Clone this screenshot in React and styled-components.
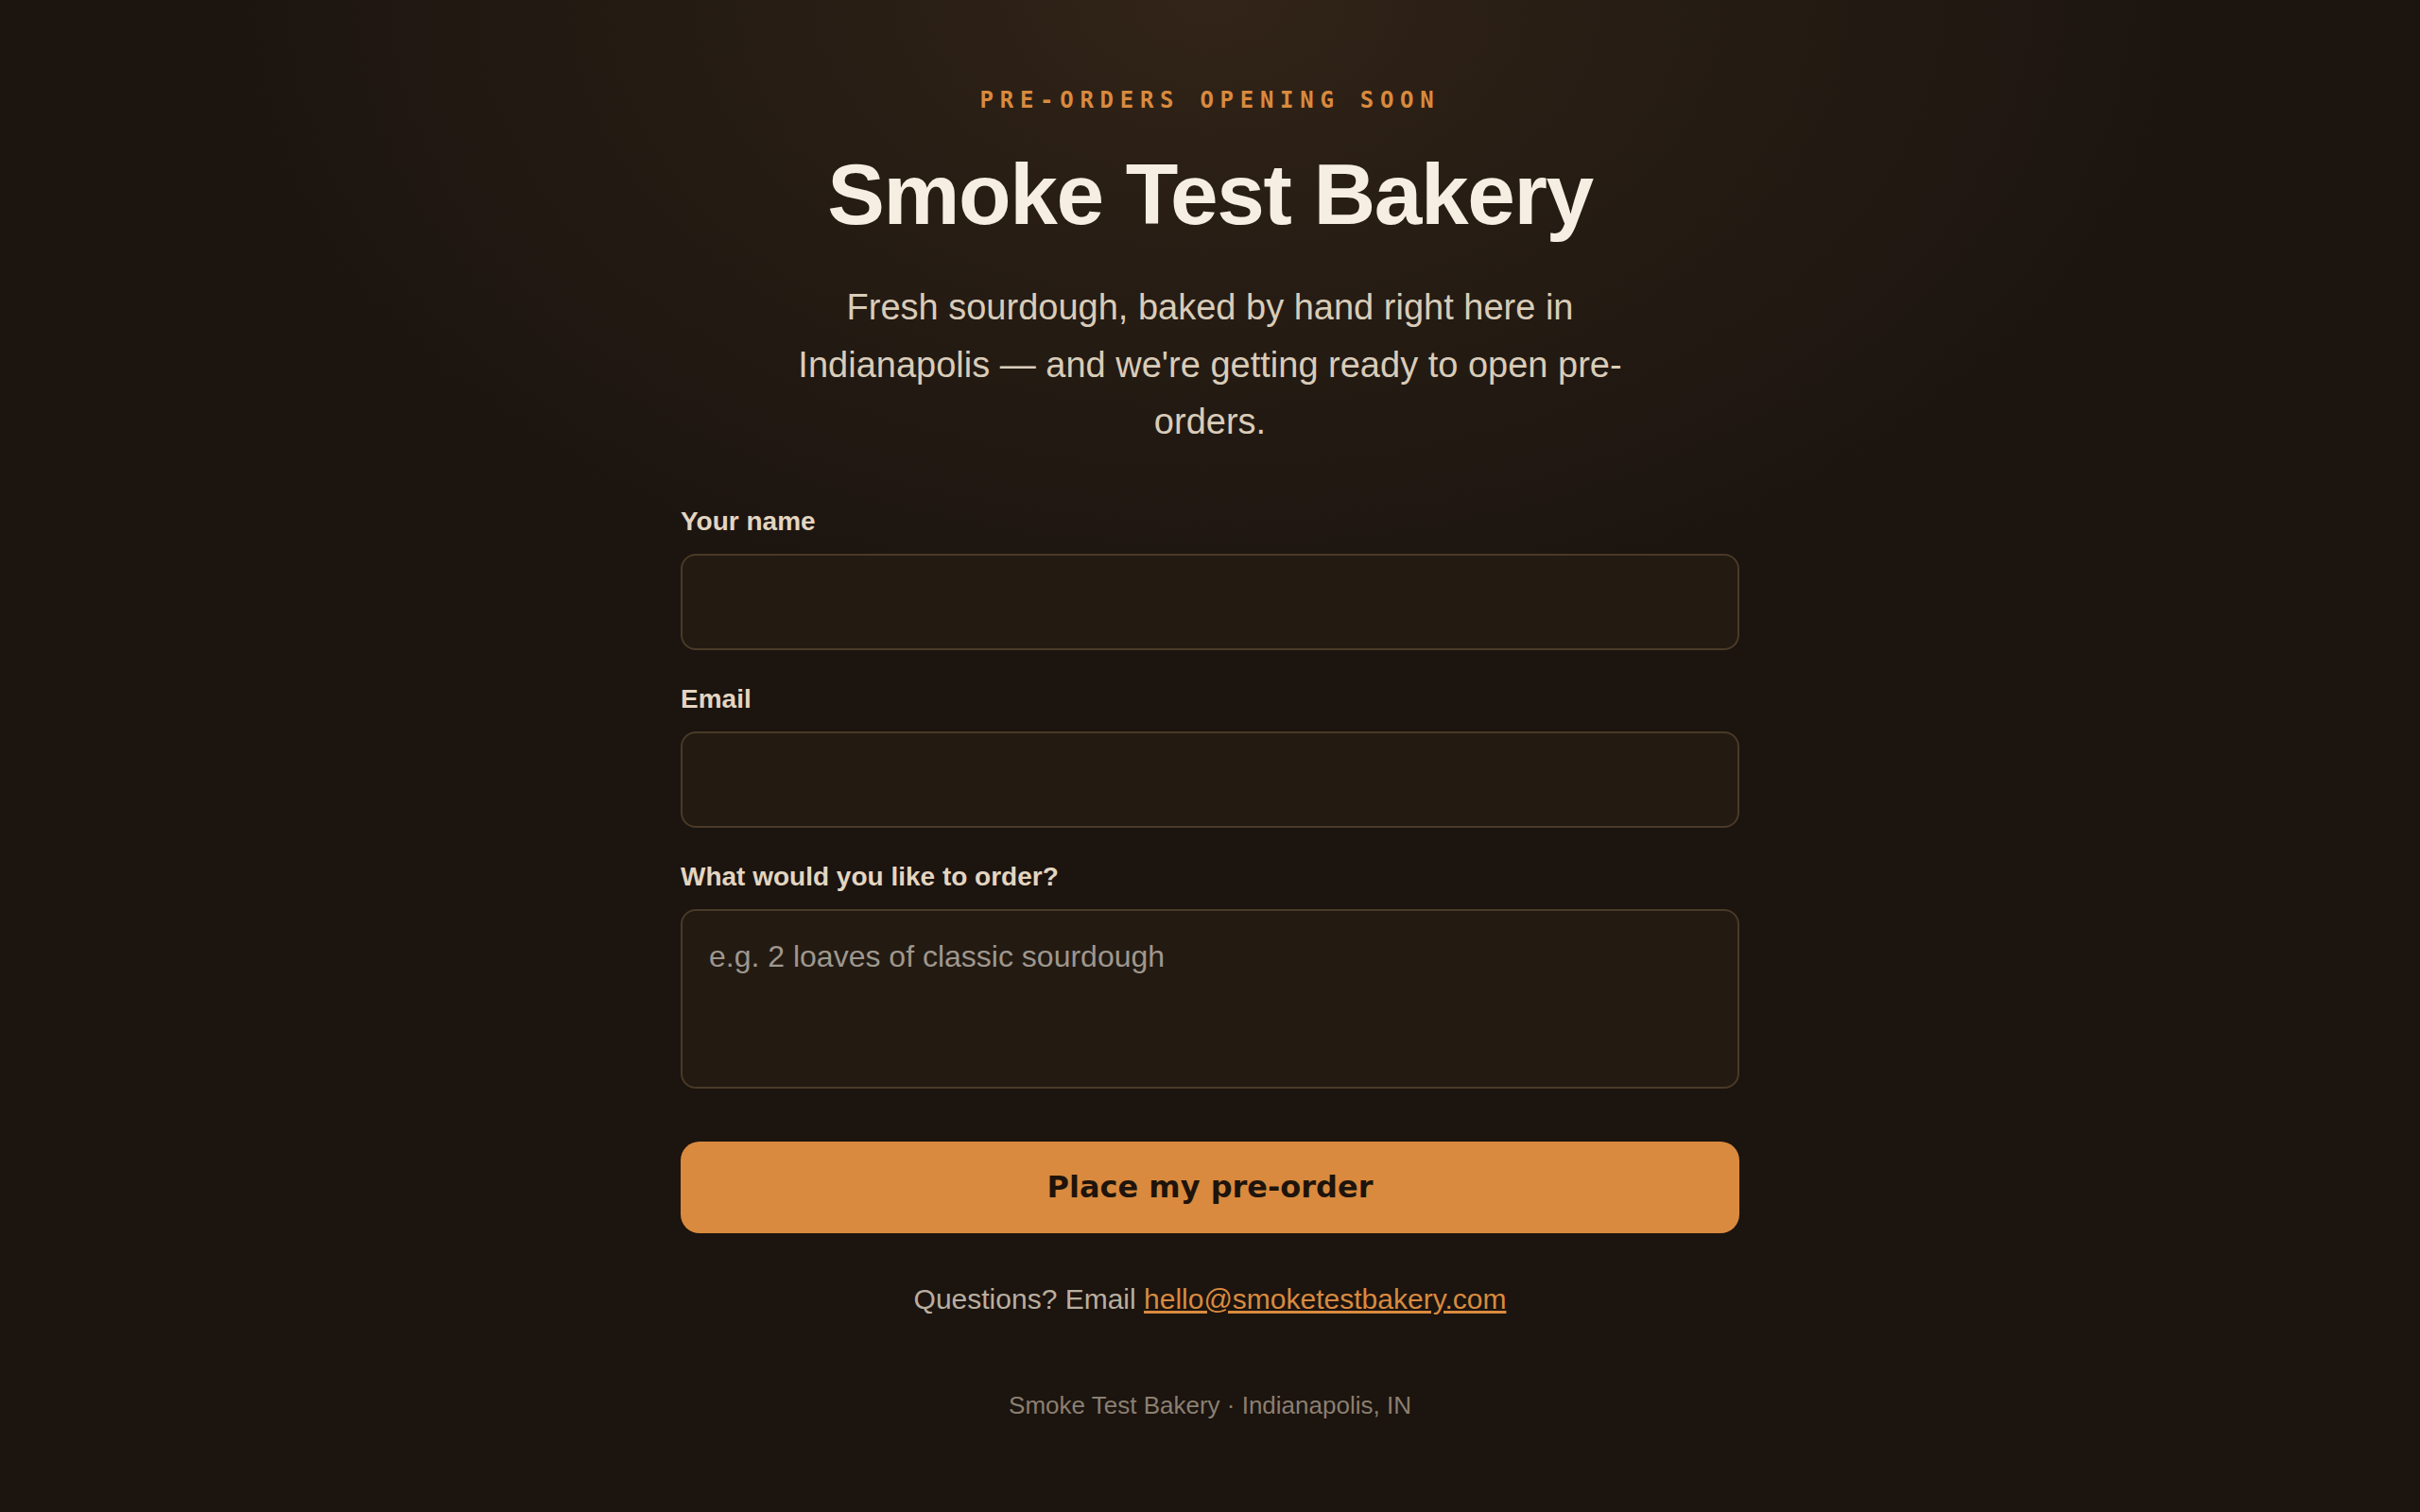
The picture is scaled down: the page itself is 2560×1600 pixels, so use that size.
import styled, { createGlobalStyle } from "styled-components";

const GlobalStyle = createGlobalStyle`
  html,
  body {
    margin: 0;
    min-height: 100%;
  }

  body {
    min-height: 100vh;
    background-color: #1b140f;
    background-image: radial-gradient(
      ellipse 1100px 700px at 50% 0%,
      #322418 0%,
      #271d14 40%,
      #1b140f 100%
    );
    background-repeat: no-repeat;
    font-family: "Liberation Sans", Arial, sans-serif;
    color: #e3d5c1;
  }

  * {
    box-sizing: border-box;
  }
`;

const Page = styled.main`
  width: 1120px;
  margin: 0 auto;
  padding: 92px 0 80px;
  text-align: center;
`;

const Eyebrow = styled.p`
  margin: 0;
  font-family: "DejaVu Sans Mono", monospace;
  font-size: 24px;
  font-weight: 700;
  line-height: 28px;
  letter-spacing: 0.28em;
  color: #d98a3e;
`;

const Title = styled.h1`
  margin: 36px 0 0;
  font-size: 91px;
  font-weight: 700;
  line-height: 1.1;
  letter-spacing: -0.015em;
  color: #f6eee2;
`;

const Intro = styled.p`
  max-width: 900px;
  margin: 39px auto 0;
  font-size: 38px;
  line-height: 60.5px;
  color: #d9ccb9;
`;

const Form = styled.form`
  display: flex;
  flex-direction: column;
  gap: 36px;
  margin-top: 59px;
  text-align: left;
`;

const Field = styled.div`
  display: flex;
  flex-direction: column;
  gap: 18px;
`;

const Label = styled.label`
  font-size: 28px;
  font-weight: 700;
  line-height: 32px;
  color: #e3d5c1;
`;

const Input = styled.input`
  height: 102px;
  padding: 0 28px;
  font-family: "Liberation Sans", Arial, sans-serif;
  font-size: 32px;
  color: #f0e6d8;
  background: #231a12;
  border: 2px solid #4a3a27;
  border-radius: 16px;
  outline: none;
`;

const TextArea = styled.textarea`
  height: 190px;
  padding: 28px;
  font-family: "Liberation Sans", Arial, sans-serif;
  font-size: 32px;
  line-height: 40px;
  color: #f0e6d8;
  background: #231a12;
  border: 2px solid #4a3a27;
  border-radius: 16px;
  outline: none;
  resize: none;

  &::placeholder {
    color: #9e978e;
  }
`;

const SubmitButton = styled.button`
  height: 97px;
  margin-top: 20px;
  font-family: "DejaVu Sans", sans-serif;
  font-size: 32px;
  font-weight: 700;
  color: #1e140c;
  background: #d98a3e;
  border: none;
  border-radius: 20px;
  cursor: pointer;
`;

const Contact = styled.p`
  margin: 52px 0 0;
  font-size: 30px;
  line-height: 35px;
  color: #b9ae9f;

  a {
    color: #d98a3e;
    text-decoration: underline;
  }
`;

const Footer = styled.footer`
  margin-top: 80px;
  font-size: 26px;
  line-height: 30px;
  color: #8b7f71;
`;

export default function App() {
  return (
    <>
      <GlobalStyle />
      <Page>
        <Eyebrow>PRE-ORDERS OPENING SOON</Eyebrow>
        <Title>Smoke Test Bakery</Title>
        <Intro>
          Fresh sourdough, baked by hand right here in Indianapolis — and
          we're getting ready to open pre-orders.
        </Intro>

        <Form onSubmit={(e) => e.preventDefault()}>
          <Field>
            <Label htmlFor="name">Your name</Label>
            <Input id="name" type="text" />
          </Field>
          <Field>
            <Label htmlFor="email">Email</Label>
            <Input id="email" type="email" />
          </Field>
          <Field>
            <Label htmlFor="order">What would you like to order?</Label>
            <TextArea
              id="order"
              placeholder="e.g. 2 loaves of classic sourdough"
            />
          </Field>
          <SubmitButton type="submit">Place my pre-order</SubmitButton>
        </Form>

        <Contact>
          Questions? Email{" "}
          <a href="mailto:hello@smoketestbakery.com">
            hello@smoketestbakery.com
          </a>
        </Contact>

        <Footer>Smoke Test Bakery · Indianapolis, IN</Footer>
      </Page>
    </>
  );
}
